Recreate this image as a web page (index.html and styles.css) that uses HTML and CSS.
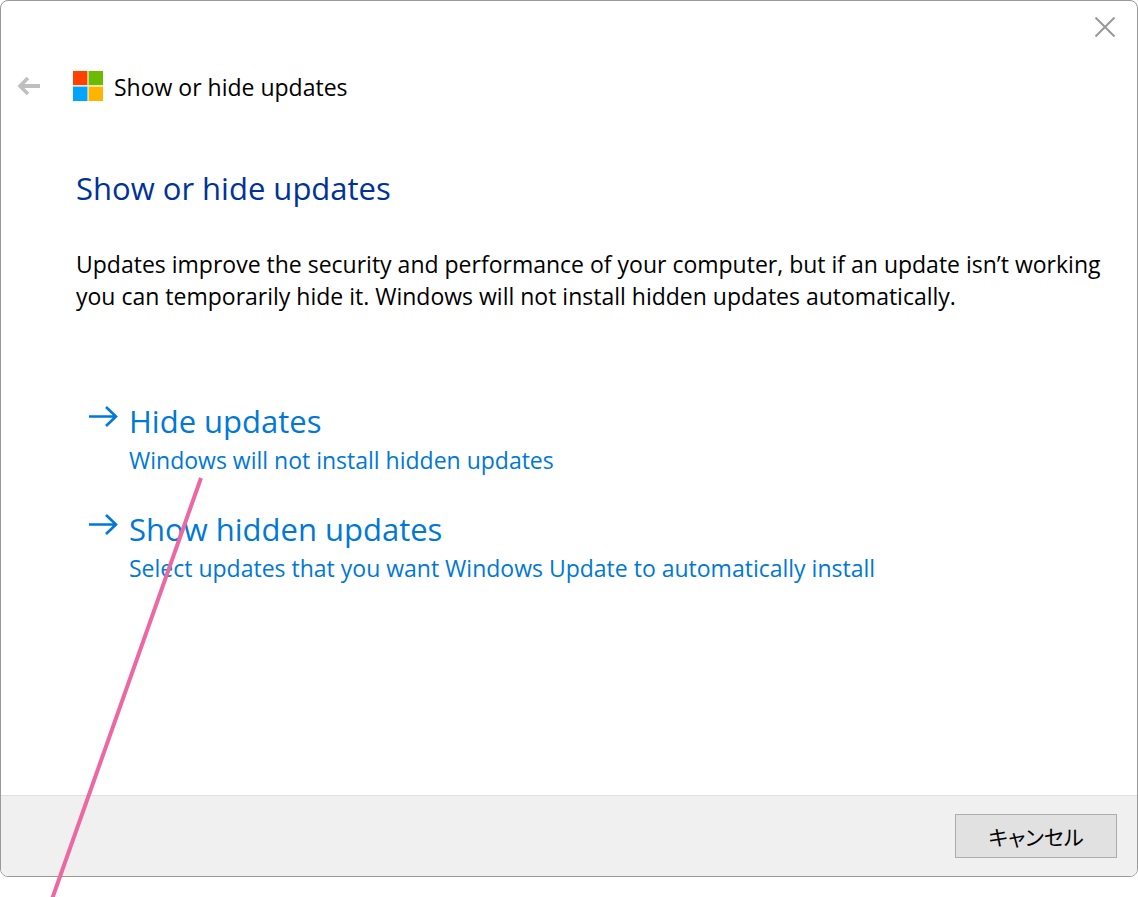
FILE: index.html
```html
<!DOCTYPE html>
<html lang="en">
<head>
  <meta charset="UTF-8">
  <meta name="viewport" content="width=device-width, initial-scale=1.0">
  <title>Show or hide updates</title>
  <link rel="stylesheet" href="styles.css">
</head>
<body>

  <div class="dialog">
    <div class="titlebar">
      <button type="button" class="icon-button" aria-label="Close">
        <svg width="20" height="20" viewBox="0 0 20 20" fill="none" stroke="#999" stroke-width="2">
          <path d="M0.5 0.5 19.5 19.5M19.5 0.5 0.5 19.5"/>
        </svg>
      </button>
    </div>

    <header class="header">
      <button type="button" class="icon-button back" aria-label="Back" disabled>
        <svg width="24" height="20" viewBox="0 0 24 20" fill="none" stroke="#bfbfbf" stroke-width="4">
          <path d="M3 10H23"/>
          <path d="M11 2 3 10 11 18" stroke-width="3.6"/>
        </svg>
      </button>
      <svg class="logo" width="30" height="30" viewBox="0 0 30 30">
        <path fill="#ffe0c0" d="M0 0H15V15H0Z"/>
        <path fill="#dcefc0" d="M15 0H30V15H15Z"/>
        <path fill="#c0e6fc" d="M0 15H15V30H0Z"/>
        <path fill="#ffebb8" d="M15 15H30V30H15Z"/>
        <path fill="#ff4000" d="M0 0H14.3V14H0Z"/>
        <path fill="#6bbc00" d="M15.7 0H30V14H15.7Z"/>
        <path fill="#00a4f8" d="M0 15.8H14.3V30H0Z"/>
        <path fill="#ffb400" d="M15.7 15.8H30V30H15.7Z"/>
      </svg>
      <span class="header-title">Show or hide updates</span>
    </header>

    <main class="content">
      <h1>Show or hide updates</h1>
      <p>Updates improve the security and performance of your computer, but if an update isn’t working you can temporarily hide it. Windows will not install hidden updates automatically.</p>

      <div class="commands">
        <a href="#hide" class="command">
          <svg width="30" height="22" viewBox="0 0 30 22" fill="none" stroke="#0078d7" stroke-width="2.6">
            <path d="M1 10.5H28M18 1 28 10.5 18 20"/>
          </svg>
          <span class="command-text">
            <span class="command-title">Hide updates</span>
            <span>Windows will not install hidden updates</span>
          </span>
        </a>
        <a href="#show" class="command">
          <svg width="30" height="22" viewBox="0 0 30 22" fill="none" stroke="#0078d7" stroke-width="2.6">
            <path d="M1 10.5H28M18 1 28 10.5 18 20"/>
          </svg>
          <span class="command-text">
            <span class="command-title">Show hidden updates</span>
            <span>Select updates that you want Windows Update to automatically install</span>
          </span>
        </a>
      </div>
    </main>

    <footer class="footer">
      <button type="button" class="cancel" lang="ja">キャンセル</button>
    </footer>
  </div>

  <!-- callout line -->
  <svg class="callout" width="160" height="424" viewBox="0 0 160 424" fill="none" stroke="#eb68a3" stroke-width="4">
    <path d="M151 4 1 428"/>
  </svg>

</body>
</html>
```

FILE: styles.css
```css
* {
  box-sizing: border-box;
}
body {
  margin: 0;
  min-height: 100vh;
  padding-bottom: 20px;
  display: flex;
  position: relative;
  overflow-x: hidden;
  background-color: white;
  color: black;
  font-family: "Open Sans", "Noto Sans", "Noto Sans CJK JP", sans-serif;
  font-size: 23px;
  line-height: 32px;
}
.dialog {
  flex: 1;
  display: flex;
  flex-direction: column;
  border: 1px solid #999;
  border-radius: 8px;
  overflow: hidden;
}
.titlebar {
  display: flex;
  justify-content: flex-end;
  padding: 16px 22px;
}
.icon-button {
  display: flex;
  padding: 0;
  border: none;
  background: none;
}
.header {
  display: flex;
  align-items: center;
  padding: 16px 16px 0;
}
.header-title {
  padding-top: 2px;
}
.back {
  margin-right: 32px;
}
.logo {
  margin-right: 11px;
}
.content {
  flex: 1;
  padding: 63px 24px 0 75px;
}
h1 {
  margin: 0;
  color: #003399;
  font-size: 31px;
  font-weight: normal;
  line-height: 44px;
}
p {
  margin: 38px 0 0;
}
.commands {
  display: flex;
  flex-direction: column;
  align-items: flex-start;
  gap: 30px;
  margin: 86px 12px 0;
}
.command {
  display: flex;
  gap: 11px;
  color: #0078d7;
  text-decoration: none;
}
.command svg {
  flex: none;
  margin-top: 8px;
}
.command-text {
  display: flex;
  flex-direction: column;
}
.command-title {
  font-size: 31px;
  line-height: 46px;
}
.footer {
  display: flex;
  justify-content: flex-end;
  padding: 18px 20px;
  border-top: 1px solid #dfdfdf;
  background-color: #f0f0f0;
}
.cancel {
  width: 162px;
  height: 44px;
  border: 1px solid #adadad;
  background-color: #e1e1e1;
  color: black;
  font-family: "Noto Sans CJK JP", sans-serif;
  font-size: 21px;
  font-feature-settings: "palt";
}
.callout {
  position: absolute;
  top: 474px;
  left: 50px;
  pointer-events: none;
}
```
